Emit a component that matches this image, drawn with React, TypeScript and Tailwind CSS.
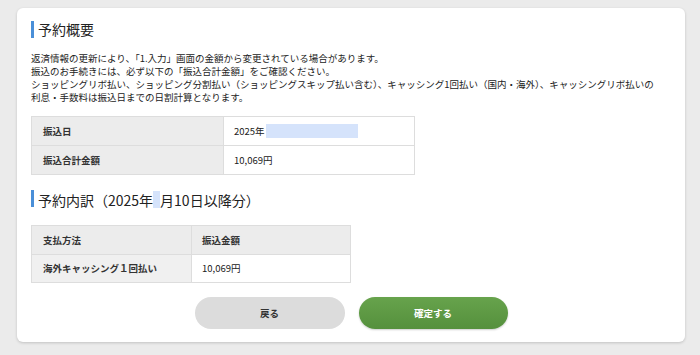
import React from "react"

const font = { fontFamily: '"Noto Sans CJK JP", "Noto Sans", sans-serif' }

function Heading({ children }: { children: React.ReactNode }) {
	return (
		<div className="flex h-[18px] items-center gap-[4px]">
			<span className="h-[17px] w-[3px] bg-[#4a8fd8]" />
			<h2 className="text-[14px] leading-none text-[#222]">{children}</h2>
		</div>
	)
}

export default function App() {
	return (
		<div
			className="h-[355px] w-[700px] bg-[#ebebeb] pl-[17px] pt-[8px] text-[#222]"
			style={font}
		>
			<div className="h-[334px] w-[668px] rounded-[6px] bg-white pl-[14px] pt-[12px] shadow-[0_1px_3px_rgba(0,0,0,0.18)]">
				<Heading>予約概要</Heading>

				<div className="mt-[14px] text-[9.5px] leading-[13px] text-[#222]">
					<p>返済情報の更新により、「1.入力」画面の金額から変更されている場合があります。</p>
					<p>振込のお手続きには、必ず以下の「振込合計金額」をご確認ください。</p>
					<p>
						ショッピングリボ払い、ショッピング分割払い（ショッピングスキップ払い含む）、キャッシング1回払い（国内・海外）、キャッシングリボ払いの
					</p>
					<p>利息・手数料は振込日までの日割計算となります。</p>
				</div>

				<table className="mt-[12px] w-[384px] border-collapse text-[9.5px]">
					<tbody>
						<tr className="h-[29px]">
							<td className="w-[192px] border border-[#dddddd] bg-[#ececec] pl-[11px] font-bold text-[#333]">
								振込日
							</td>
							<td className="border border-[#dddddd] pl-[10px]">
								<div className="flex items-center">
									<span>2025年</span>
									<span className="ml-[1px] h-[14px] w-[92px] bg-[#d5e3fb]" />
								</div>
							</td>
						</tr>
						<tr className="h-[29px]">
							<td className="border border-[#dddddd] bg-[#ececec] pl-[11px] font-bold text-[#333]">
								振込合計金額
							</td>
							<td className="border border-[#dddddd] pl-[10px]">10,069円</td>
						</tr>
					</tbody>
				</table>

				<div className="mt-[14px]">
					<Heading>
						予約内訳（2025年
						<span className="inline-block h-[17px] w-[7px] translate-y-[2px] bg-[#d5e3fb]" />
						月10日以降分）
					</Heading>
				</div>

				<table className="mt-[18px] w-[320px] border-collapse text-[9.5px]">
					<tbody>
						<tr className="h-[29px] bg-[#ececec] font-bold text-[#333]">
							<td className="w-[160px] border border-[#dddddd] pl-[11px]">支払方法</td>
							<td className="border border-[#dddddd] pl-[10px]">振込金額</td>
						</tr>
						<tr className="h-[28px]">
							<td className="border border-[#dddddd] bg-[#f0f0f0] pl-[11px] font-bold text-[#333]">
								海外キャッシング１回払い
							</td>
							<td className="border border-[#dddddd] pl-[10px]">10,069円</td>
						</tr>
					</tbody>
				</table>

				<div className="mt-[14px] flex justify-center gap-[14px] pr-[14px]">
					<button className="h-[32px] w-[150px] rounded-full bg-[#dcdcdc] text-[9.5px] font-bold text-[#333]">
						戻る
					</button>
					<button className="h-[32px] w-[149px] rounded-full bg-gradient-to-b from-[#67a34c] to-[#55903d] text-[9.5px] font-bold text-white shadow-[0_1px_2px_rgba(0,0,0,0.2)]">
						確定する
					</button>
				</div>
			</div>
		</div>
	)
}
